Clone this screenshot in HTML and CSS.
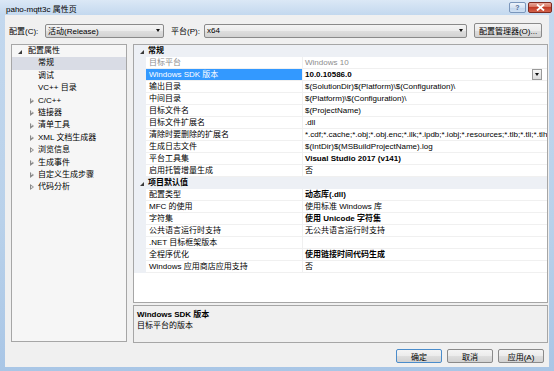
FILE: index.html
```html
<!DOCTYPE html>
<html lang="zh-cn">
<head>
    <meta charset="UTF-8">
    <title>paho-mqtt3c 属性页</title>
    <link rel="stylesheet" href="styles.css">
</head>
<body>
<div class="window">
    <div class="titlebar">
        <span class="title">paho-mqtt3c 属性页</span>
        <div class="caption">
            <span class="cap help">?</span>
            <span class="cap close">
                <svg width="9" height="7" viewBox="0 0 9 7"><path d="M1 0.5 L8 6.5 M8 0.5 L1 6.5" stroke="#fff" stroke-width="1.8"/></svg>
            </span>
        </div>
    </div>

    <div class="client">
        <!-- 配置 / 平台 -->
        <div class="toolbar">
            <span class="lbl lbl-config">配置(C):</span>
            <div class="combo combo-config"><span>活动(Release)</span><i class="drop"></i></div>
            <span class="lbl lbl-platform">平台(P):</span>
            <div class="combo combo-platform"><span>x64</span><i class="drop"></i></div>
            <button class="btn btn-manager">配置管理器(O)...</button>
        </div>

        <div class="main">
            <div class="tree">
                <div class="node top"><span class="twist"><i class="open"></i></span>配置属性</div>
                <div class="node child selected"><span class="twist"></span>常规</div>
                <div class="node child"><span class="twist"></span>调试</div>
                <div class="node child"><span class="twist"></span>VC++ 目录</div>
                <div class="node child"><span class="twist"><i class="shut"></i></span>C/C++</div>
                <div class="node child"><span class="twist"><i class="shut"></i></span>链接器</div>
                <div class="node child"><span class="twist"><i class="shut"></i></span>清单工具</div>
                <div class="node child"><span class="twist"><i class="shut"></i></span>XML 文档生成器</div>
                <div class="node child"><span class="twist"><i class="shut"></i></span>浏览信息</div>
                <div class="node child"><span class="twist"><i class="shut"></i></span>生成事件</div>
                <div class="node child"><span class="twist"><i class="shut"></i></span>自定义生成步骤</div>
                <div class="node child"><span class="twist"><i class="shut"></i></span>代码分析</div>
            </div>

            <div class="side">
                <div class="grid">
                    <div class="row cat"><span class="gutter"><i class="open"></i></span><span class="catname">常规</span></div>
                    <div class="row readonly"><span class="gutter"></span><span class="name">目标平台</span><span class="value">Windows 10</span></div>
                    <div class="row active"><span class="gutter"></span><span class="name">Windows SDK 版本</span><span class="value"><b>10.0.10586.0</b><i class="cell-drop"></i></span></div>
                    <div class="row"><span class="gutter"></span><span class="name">输出目录</span><span class="value">$(SolutionDir)$(Platform)\$(Configuration)\</span></div>
                    <div class="row"><span class="gutter"></span><span class="name">中间目录</span><span class="value">$(Platform)\$(Configuration)\</span></div>
                    <div class="row"><span class="gutter"></span><span class="name">目标文件名</span><span class="value">$(ProjectName)</span></div>
                    <div class="row"><span class="gutter"></span><span class="name">目标文件扩展名</span><span class="value">.dll</span></div>
                    <div class="row"><span class="gutter"></span><span class="name">清除时要删除的扩展名</span><span class="value">*.cdf;*.cache;*.obj;*.obj.enc;*.ilk;*.ipdb;*.iobj;*.resources;*.tlb;*.tli;*.tlh;*.tmp;*.rsp;*.pgc;*.pgd;*.meta;*.tlog;*.manifest;*.res;*.pch;*.exp;*.idb</span></div>
                    <div class="row"><span class="gutter"></span><span class="name">生成日志文件</span><span class="value">$(IntDir)$(MSBuildProjectName).log</span></div>
                    <div class="row"><span class="gutter"></span><span class="name">平台工具集</span><span class="value"><b>Visual Studio 2017 (v141)</b></span></div>
                    <div class="row"><span class="gutter"></span><span class="name">启用托管增量生成</span><span class="value">否</span></div>
                    <div class="row cat"><span class="gutter"><i class="open"></i></span><span class="catname">项目默认值</span></div>
                    <div class="row"><span class="gutter"></span><span class="name">配置类型</span><span class="value"><b>动态库(.dll)</b></span></div>
                    <div class="row"><span class="gutter"></span><span class="name">MFC 的使用</span><span class="value">使用标准 Windows 库</span></div>
                    <div class="row"><span class="gutter"></span><span class="name">字符集</span><span class="value"><b>使用 Unicode 字符集</b></span></div>
                    <div class="row"><span class="gutter"></span><span class="name">公共语言运行时支持</span><span class="value">无公共语言运行时支持</span></div>
                    <div class="row"><span class="gutter"></span><span class="name">.NET 目标框架版本</span><span class="value"></span></div>
                    <div class="row"><span class="gutter"></span><span class="name">全程序优化</span><span class="value"><b>使用链接时间代码生成</b></span></div>
                    <div class="row"><span class="gutter"></span><span class="name">Windows 应用商店应用支持</span><span class="value">否</span></div>
                </div>
                <div class="desc">
                    <div class="desc-title">Windows SDK 版本</div>
                    <div class="desc-text">目标平台的版本</div>
                </div>
            </div>
        </div>

        <div class="footer">
            <button class="btn btn-ok">确定</button>
            <button class="btn">取消</button>
            <button class="btn">应用(A)</button>
        </div>
    </div>
</div>
</body>
</html>
```

FILE: styles.css
```css
* {
    box-sizing: border-box;
}

body {
    margin: 0;
    font-family: "Liberation Sans", "Noto Sans CJK SC", sans-serif;
    font-size: 8px;
    color: #000;
}

.window {
    width: 554px;
    height: 371px;
    display: flex;
    flex-direction: column;
    padding: 0 5px 4px 5px;
    background: linear-gradient(#dbe8f6, #c3d8ee 15px, #b9d1ea 60%, #a9c6e6);
}

/* title bar */
.titlebar {
    height: 15px;
    display: flex;
    align-items: center;
}

.title {
    padding-left: 1px;
    padding-top: 1px;
}

.caption {
    margin-left: auto;
    margin-right: -3px;
    align-self: flex-start;
    margin-top: 2px;
    display: flex;
    gap: 2px;
}

.cap {
    height: 11px;
    display: flex;
    align-items: center;
    justify-content: center;
    border-radius: 2px;
}

.help {
    width: 17px;
    border: 1px solid #7a96bb;
    background: linear-gradient(#eef4fb, #d5e3f3 50%, #c2d5ec 51%, #cfe0f3);
    color: #4e6b95;
    font-weight: bold;
    font-size: 7px;
}

.close {
    width: 24px;
    border: 1px solid #7e2a20;
    background: linear-gradient(#e9a99c, #d6735f 45%, #c23b27 50%, #d3624a);
}

/* client area */
.client {
    flex: 1;
    background: #f0f0f0;
    display: flex;
    flex-direction: column;
}

.toolbar {
    margin-top: 8px;
    height: 15px;
    display: flex;
    align-items: center;
    padding-left: 4px;
}

.lbl-config {
    width: 36px;
}

.lbl-platform {
    width: 33px;
    margin-left: 7px;
}

.combo {
    height: 14px;
    border: 1px solid #8a8a8a;
    border-radius: 2px;
    background: linear-gradient(#f4f4f4, #ebebeb 50%, #dedede 51%, #d2d2d2);
    display: flex;
    align-items: center;
    padding-left: 2px;
    padding-right: 3px;
}

.combo span {
    flex: 1;
}

.combo-config {
    width: 119px;
}

.combo-platform {
    width: 263px;
}

.drop {
    width: 0;
    height: 0;
    border-left: 2.5px solid transparent;
    border-right: 2.5px solid transparent;
    border-top: 3px solid #111;
}

.btn {
    font: inherit;
    color: #000;
    height: 15px;
    padding: 0;
    border: 1px solid #8a8a8a;
    border-radius: 2px;
    background: linear-gradient(#f4f4f4, #ebebeb 50%, #dedede 51%, #d2d2d2);
}

.btn-manager {
    width: 68px;
    margin-left: 7px;
}

/* main area */
.main {
    margin-top: 6px;
    height: 299px;
    display: flex;
    padding-left: 6px;
    gap: 6px;
}

.tree {
    width: 116px;
    height: 298px;
    border: 1px solid #a6a6a6;
    background: #f6f6f6;
}

.node {
    height: 12.4px;
    line-height: 12.4px;
    display: flex;
    align-items: center;
    white-space: nowrap;
}

.node.top {
    padding-left: 6px;
}

.node.top .twist {
    width: 10px;
}

.node.child {
    padding-left: 18px;
}

.node.child .twist {
    width: 8px;
}

.twist {
    display: flex;
    align-items: center;
}

.node.selected {
    background: #d9dce5;
}

.open {
    width: 0;
    height: 0;
    border-left: 4px solid transparent;
    border-bottom: 4px solid #3a3a3a;
    margin-top: 1px;
}

.shut {
    width: 0;
    height: 0;
    border-top: 3px solid transparent;
    border-bottom: 3px solid transparent;
    border-left: 4px solid #8a8a8a;
    position: relative;
}

.shut::after {
    content: "";
    position: absolute;
    left: -3.3px;
    top: -1.7px;
    border-top: 1.7px solid transparent;
    border-bottom: 1.7px solid transparent;
    border-left: 2.2px solid #f6f6f6;
}

.side {
    width: 415px;
    display: flex;
    flex-direction: column;
    gap: 2px;
}

/* property grid */
.grid {
    height: 260px;
    border: 1px solid #a6a6a6;
    background: #fff;
    overflow: hidden;
}

.row {
    height: 12px;
    display: flex;
    white-space: nowrap;
}

.gutter {
    width: 12px;
    flex: none;
    background: #edf0f5;
    display: flex;
    align-items: center;
    padding-left: 6px;
}

.name {
    width: 157px;
    flex: none;
    line-height: 11px;
    padding-left: 3px;
    border-bottom: 1px solid #f0f0f0;
    border-right: 1px solid #f0f0f0;
    overflow: hidden;
}

.value {
    flex: 1;
    min-width: 0;
    line-height: 11px;
    padding-left: 2px;
    border-bottom: 1px solid #f0f0f0;
    overflow: hidden;
    display: flex;
    align-items: center;
}

.row.cat {
    background: #edf0f5;
}

.catname {
    padding-left: 2px;
    font-weight: bold;
    line-height: 12px;
}

.row.readonly .name,
.row.readonly .value {
    color: #8d8d8d;
}

.row.active .name {
    background: #3399ff;
    color: #fff;
}

.row.active .value b {
    flex: 1;
}

.cell-drop {
    width: 10px;
    height: 11px;
    margin-right: 5px;
    border: 1px solid #9a9a9a;
    background: linear-gradient(#f6f6f6, #dcdcdc);
    display: flex;
    align-items: center;
    justify-content: center;
}

.cell-drop::after {
    content: "";
    border-left: 2.5px solid transparent;
    border-right: 2.5px solid transparent;
    border-top: 3px solid #111;
}

/* description */
.desc {
    height: 38px;
    border: 1px solid #a6a6a6;
    background: #f0f0f0;
    padding: 3px 3px;
    line-height: 11px;
}

.desc-title {
    font-weight: bold;
}

/* buttons */
.footer {
    margin-top: 6px;
    display: flex;
    justify-content: flex-end;
    gap: 5px;
    padding-right: 5px;
}

.footer .btn {
    width: 46px;
    height: 14px;
}

.btn-ok {
    border-color: #4a8ccb;
}
```
